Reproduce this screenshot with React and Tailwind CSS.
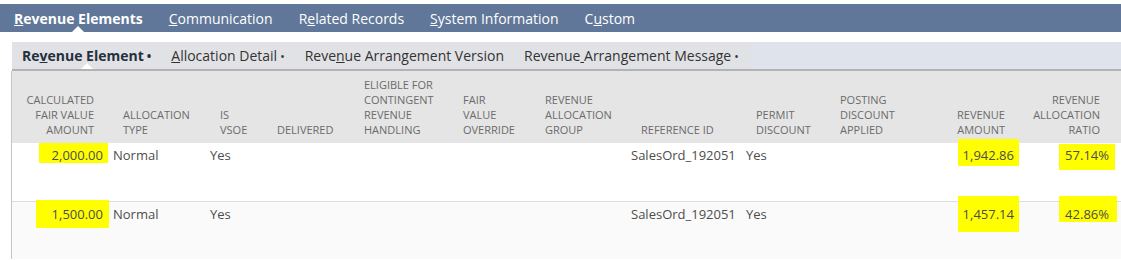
import React from 'react';

const mainTabs = [
  { pre: '', key: 'R', post: 'evenue Elements', active: true },
  { pre: '', key: 'C', post: 'ommunication' },
  { pre: 'R', key: 'e', post: 'lated Records' },
  { pre: '', key: 'S', post: 'ystem Information' },
  { pre: 'C', key: 'u', post: 'stom' },
];

const subTabs = [
  { pre: 'Re', key: 'v', post: 'enue Element', dot: true, active: true },
  { pre: '', key: 'A', post: 'llocation Detail', dot: true },
  { pre: 'Reve', key: 'n', post: 'ue Arrangement Version' },
  { pre: 'Revenue', key: '\u00a0', post: 'Arrangement Message', dot: true },
];

const cols = 'grid grid-cols-[96px_97px_57px_87px_99px_82px_96px_115px_84px_115px_79px_95px_1fr]';

const headers = [
  { lines: ['CALCULATED', 'FAIR VALUE', 'AMOUNT'], right: true },
  { lines: ['ALLOCATION', 'TYPE'] },
  { lines: ['IS', 'VSOE'] },
  { lines: ['DELIVERED'] },
  { lines: ['ELIGIBLE FOR', 'CONTINGENT', 'REVENUE', 'HANDLING'] },
  { lines: ['FAIR', 'VALUE', 'OVERRIDE'] },
  { lines: ['REVENUE', 'ALLOCATION', 'GROUP'] },
  { lines: ['REFERENCE ID'] },
  { lines: ['PERMIT', 'DISCOUNT'] },
  { lines: ['POSTING', 'DISCOUNT', 'APPLIED'] },
  { lines: ['REVENUE', 'AMOUNT'], right: true },
  { lines: ['REVENUE', 'ALLOCATION', 'RATIO'], right: true },
];

// marker highlights drawn over the screenshot, offsets relative to the text box
const Marked = ({ children, mark }) => (
  <span className="relative inline-block">
    <span className={`absolute bg-[#ffff00] ${mark}`} />
    <span className="relative">{children}</span>
  </span>
);

const rows = [
  {
    fair: '2,000.00',
    fairMark: '-left-[13px] -right-[5px] -top-[3px] bottom-[1px]',
    amount: '1,942.86',
    amountMark: '-left-[5px] -right-[5px] -top-[7px] -bottom-[2px]',
    ratio: '57.14%',
    ratioMark: '-left-[6px] -right-[6px] -top-[2px] -bottom-[6px]',
    bg: 'bg-white',
  },
  {
    fair: '1,500.00',
    fairMark: '-left-[16px] -right-[6px] -top-[5px] -bottom-[5px]',
    amount: '1,457.14',
    amountMark: '-left-[5px] -right-[5px] -top-[9px] -bottom-[9px]',
    ratio: '42.86%',
    ratioMark: '-left-[6px] -right-[8px] -top-[9px] bottom-[1px]',
    bg: 'bg-[#fafafa] border-t border-[#dddddd]',
  },
];

const Triangle = () => (
  <span className="absolute left-1/2 -translate-x-1/2 bottom-0 w-0 h-0 border-x-[6px] border-b-[6px] border-x-transparent border-b-white" />
);

const App = () => {
  return (
    <div className="w-[1121px] h-[260px] overflow-hidden bg-white pt-1 font-['Open_Sans',sans-serif]">
      {/* main tabs */}
      <div className="h-[28px] bg-[#607799] flex items-stretch pl-[14px] gap-[26px] text-white text-[14px]">
        {mainTabs.map((t) => (
          <div key={t.post} className={`relative flex items-center ${t.active ? 'font-bold' : ''}`}>
            <span>
              {t.pre}
              <u>{t.key}</u>
              {t.post}
            </span>
            {t.active && <Triangle />}
          </div>
        ))}
      </div>

      {/* sub tabs */}
      <div className="mt-[10px] ml-[12px] h-[27px] bg-[#dfe4ec] flex">
        <div className="h-full bg-[#e1e2e6] flex items-stretch pl-[10px] pr-[12px] gap-[20px] text-[14px] text-[#333333]">
          {subTabs.map((t) => (
            <div key={t.post} className={`relative flex items-center ${t.active ? 'font-bold text-[#26303d]' : ''}`}>
              <span className="whitespace-nowrap">
                {t.pre}
                <u>{t.key}</u>
                {t.post}
                {t.dot && <span className="text-[12px] ml-[3px]">•</span>}
              </span>
              {t.active && <Triangle />}
            </div>
          ))}
        </div>
      </div>
      <div className="ml-[12px] h-[2px] bg-[#b3b3b3]" />

      {/* table */}
      <div className="ml-[11px] border-l border-[#c4c4c4]">
        <div className={`${cols} h-[72px] bg-[#e5e5e5] items-end pb-[6px] text-[11px] leading-[15px] text-[#6b6b6b]`}>
          {headers.map((h, i) => (
            <div key={i} className={`whitespace-nowrap ${h.right ? 'text-right pr-[14px]' : 'pl-[15px]'}`}>
              {h.lines.map((l, j) => (
                <div key={j}>{l}</div>
              ))}
            </div>
          ))}
          <div />
        </div>

        {rows.map((r, i) => (
          <div key={i} className={`${cols} h-[58px] pt-[3px] text-[13px] leading-[18px] text-[#4d4d4d] ${r.bg}`}>
            <div className="text-right pr-[5px]">
              <Marked mark={r.fairMark}>{r.fair}</Marked>
            </div>
            <div className="pl-[5px]">Normal</div>
            <div className="pl-[5px]">Yes</div>
            <div />
            <div />
            <div />
            <div />
            <div className="pl-[5px]">SalesOrd_192051</div>
            <div className="pl-[5px]">Yes</div>
            <div />
            <div className="text-right pr-[5px]">
              <Marked mark={r.amountMark}>{r.amount}</Marked>
            </div>
            <div className="text-right pr-[5px]">
              <Marked mark={r.ratioMark}>{r.ratio}</Marked>
            </div>
            <div />
          </div>
        ))}
      </div>
    </div>
  );
};

export default App;
